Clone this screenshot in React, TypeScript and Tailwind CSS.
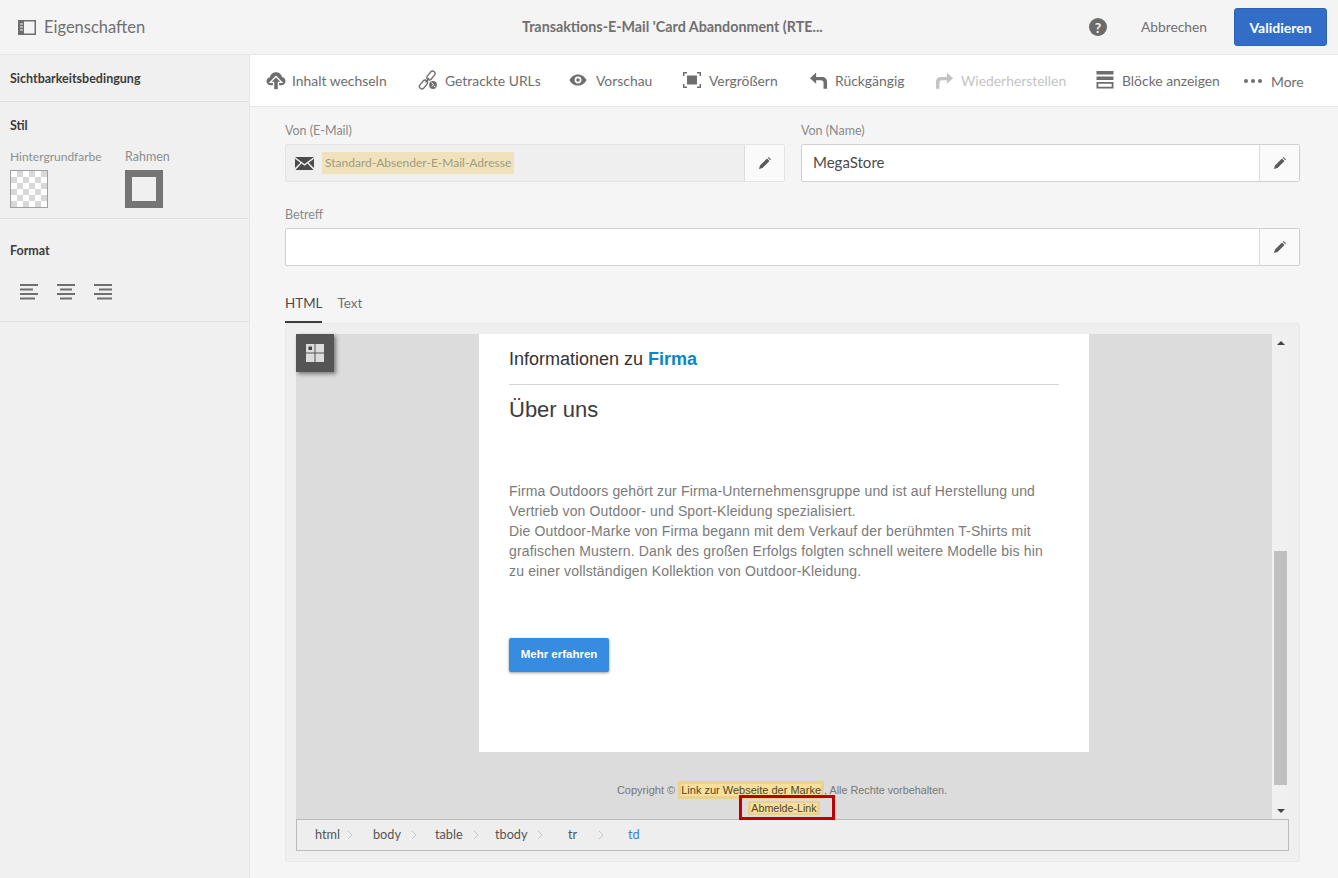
import React from 'react';

const UI = "font-['Lato','Noto_Sans',sans-serif]";

const tools = [
  { label: 'Inhalt wechseln', w: 'w-[152px]', lead: 'w-[26px]', icon: 'upload' },
  { label: 'Getrackte URLs', w: 'w-[151px]', lead: 'w-[27px]', icon: 'link' },
  { label: 'Vorschau', w: 'w-[114px]', lead: 'w-[27px]', icon: 'eye' },
  { label: 'Vergrößern', w: 'w-[126px]', lead: 'w-[26px]', icon: 'zoom' },
  { label: 'Rückgängig', w: 'w-[126px]', lead: 'w-[26px]', icon: 'undo' },
  { label: 'Wiederherstellen', w: 'w-[161px]', lead: 'w-[26px]', icon: 'redo', disabled: true },
  { label: 'Blöcke anzeigen', w: 'w-[148px]', lead: 'w-[26px]', icon: 'blocks' },
];

const ToolIcon: React.FC<{ name: string }> = ({ name }) => {
  switch (name) {
    case 'upload':
      return (
        <svg viewBox="1 1 18 19" className="w-[20px] h-[20px]" fill="currentColor">
          <path d="M5 15.500C2.600 15.500 1 13.800 1 11.700c0-2 1.400-3.400 3.200-3.700C4.700 5.200 7 3.200 10 3.200c2.900 0 5 1.800 5.700 4.400 1.900.2 3.300 1.800 3.300 3.900 0 2.200-1.600 4-4 4z" />
          <path d="M10 7.200 15.500 12.800H12.300V19.800H7.700V12.800H4.500z" stroke="#ffffff" strokeWidth="1.200" />
        </svg>
      );
    case 'link':
      return (
        <svg viewBox="0 0 20 20" className="w-[20px] h-[20px]" fill="none" stroke="currentColor" strokeWidth="1.300">
          <rect x="10.500" y="0.500" width="5" height="10" rx="2.500" transform="rotate(40 13 5.500)" />
          <rect x="3" y="9.500" width="5" height="10" rx="2.500" transform="rotate(40 5.500 14.500)" />
          <path d="M7.500 12.500 11 8" />
          <circle cx="15" cy="15" r="5" fill="#ffffff" stroke="none" />
          <circle cx="15" cy="15" r="3.900" fill="currentColor" stroke="none" />
          <path d="M13.500 12.500l2 2.200-1.600 1.800M16 16l1.500 1.200" stroke="#ffffff" strokeWidth="1" />
        </svg>
      );
    case 'eye':
      return (
        <svg viewBox="0 0 20 20" className="w-[18px] h-[18px]" fill="currentColor">
          <path fillRule="evenodd" d="M10 3.800c4.300 0 7.700 2.700 9.500 6.200-1.800 3.500-5.200 6.200-9.500 6.200S2.300 13.500.5 10C2.300 6.500 5.700 3.800 10 3.800zm0 2.400a3.800 3.800 0 1 0 0 7.600 3.800 3.800 0 0 0 0-7.600zm0 1.800a2 2 0 1 1 0 4 2 2 0 0 1 0-4z" />
        </svg>
      );
    case 'zoom':
      return (
        <svg viewBox="0 0 18 18" className="w-[18px] h-[18px]" fill="currentColor">
          <path d="M0 1h4v1.500H1.500V5H0zM14 1h4v4h-1.500V2.500H14zM0 13h1.500v2.500H4V17H0zM16.500 13H18v4h-4v-1.500h2.500zM4 4.500h10v9H4z" />
        </svg>
      );
    case 'undo':
      return (
        <svg viewBox="0 0 20 20" className="w-[19px] h-[19px]" fill="currentColor">
          <path d="M7.500 1.500 1 7.500 7.500 13.500V9.800h5c1.800 0 2.800 1 2.800 2.600v6.300h3.700V11.500c0-3.300-2.200-5.300-5.500-5.300H7.500z" />
        </svg>
      );
    case 'redo':
      return (
        <svg viewBox="0 0 20 20" className="w-[19px] h-[19px]" fill="currentColor">
          <path d="M12.500 1.500 19 7.500 12.500 13.500V9.800h-5c-1.800 0-2.800 1-2.800 2.600v6.300H1V11.500c0-3.300 2.200-5.300 5.500-5.300h6z" />
        </svg>
      );
    default:
      return (
        <svg viewBox="0 0 17 18" className="w-[18px] h-[18px]" fill="currentColor">
          <path d="M0 0h17v3.500H0zM0 5.500h17V9H0zM0 11h17v6.500H0zm1.800 1.800v2.900h13.400v-2.900z" fillRule="evenodd" />
        </svg>
      );
  }
};

const Envelope = () => (
  <svg viewBox="0 0 19 13" className="w-[19px] h-[13px] text-[#4b4b4b]" fill="currentColor">
    <path d="M0 0h19L9.500 7zM0 1.700l5.400 4L0 11zM19 1.700l-5.400 4L19 11zM6.500 6.500l3 2.200 3-2.200L18.500 13H.5z" />
  </svg>
);

const AlignIcon: React.FC<{ kind: 'left' | 'center' | 'right' }> = ({ kind }) => {
  const bars = [
    [0, 18],
    kind === 'left' ? [0, 13] : kind === 'center' ? [3, 12] : [5, 13],
    [0, 18],
    kind === 'left' ? [0, 15] : kind === 'center' ? [3, 12] : [3, 15],
  ];
  return (
    <svg viewBox="0 0 18 16" className="w-[18px] h-[16px] text-[#6e6e6e]" fill="currentColor">
      {bars.map(([x, w], i) => (
        <rect key={i} x={x} y={i * 4.500} width={w} height="2" />
      ))}
    </svg>
  );
};

const EditBtn = () => (
  <div className="w-[40px] shrink-0 flex items-center justify-center border-l border-[#dcdcdc] bg-[#fafafa]">
    <svg viewBox="0 0 12 12" className="w-[12px] h-[12px] text-[#5a5a5a]" fill="currentColor">
      <path d="M0 12 1 8.500 8 1.500 10.500 4 3.500 11zM8.800.8 9.600 0 12 2.400l-.8.8z" />
    </svg>
  </div>
);

const Section: React.FC<{ className: string; children: React.ReactNode }> = ({ className, children }) => (
  <div className={`border-b border-[#e0e0e0] px-[10px] ${className}`}>{children}</div>
);

const crumbs = [
  { t: 'html', w: 'w-[58px]', gap: 'ml-[7px]' },
  { t: 'body', w: 'w-[62px]', gap: 'ml-[10px]' },
  { t: 'table', w: 'w-[60px]', gap: 'ml-[10px]' },
  { t: 'tbody', w: 'w-[73px]', gap: 'ml-[9px]' },
  { t: 'tr', w: 'w-[60px]', gap: 'ml-[21px]' },
];

export default function App() {
  return (
    <div className={`w-[1338px] h-[878px] overflow-hidden flex flex-col bg-[#f5f5f5] text-[#6e6e6e] ${UI}`}>
      {/* Top bar */}
      <div className="h-[55px] shrink-0 bg-[#f4f4f4] border-b border-[#e6e6e6] flex items-center relative">
        <div className="flex items-center pl-[18px]">
          <svg viewBox="0 0 18 15" className="w-[18px] h-[15px]" fill="none">
            <rect x=".750" y=".750" width="16.500" height="13.500" stroke="#6e6e6e" strokeWidth="1.500" />
            <path d="M1 1h5v13H1z" fill="#6e6e6e" />
            <path d="M2 4h3M2 7h3M2 10h3" stroke="#f4f4f4" strokeWidth="1" />
          </svg>
          <span className="ml-[8px] text-[16.500px] text-[#707070]">Eigenschaften</span>
        </div>
        <div className="absolute left-[522px] top-[17px] text-[14.300px] font-bold leading-[20px] text-[#707070]">
          Transaktions-E-Mail 'Card Abandonment (RTE...
        </div>
        <div className="ml-auto flex items-center pr-[11px]">
          <div className="w-[18px] h-[18px] rounded-full bg-[#6b6b6b] text-[#f4f4f4] text-[14px] font-bold flex items-center justify-center">?</div>
          <span className="ml-[34px] text-[13.800px] text-[#707070]">Abbrechen</span>
          <button className="ml-[27px] w-[93px] h-[38px] rounded-[3px] bg-[#326ec8] border border-[#2d62b3] text-white text-[14px] font-bold">
            Validieren
          </button>
        </div>
      </div>

      <div className="flex-1 flex min-h-0">
        {/* Sidebar */}
        <aside className="w-[250px] shrink-0 bg-[#f0f0f0] border-r border-[#e8e8e8]">
          <Section className="h-[47px] flex items-center pt-[3px]">
            <span className="text-[12.500px] font-bold text-[#3c3c3c]">Sichtbarkeitsbedingung</span>
          </Section>
          <Section className="h-[117px] pt-[14px]">
            <div className="text-[12.500px] font-bold leading-[20px] text-[#3c3c3c]">Stil</div>
            <div className="flex mt-[12px]">
              <div className="w-[115px]">
                <div className="text-[12px] leading-[18px] text-[#8e8e8e]">Hintergrundfarbe</div>
                <div className="mt-[4px] w-[38px] h-[38px] border border-[#a0a0a0] bg-[conic-gradient(#d8d8d8_25%,#ffffff_0_50%,#d8d8d8_0_75%,#ffffff_0)] bg-[length:12px_12px]" />
              </div>
              <div>
                <div className="text-[12.500px] leading-[18px] text-[#8e8e8e]">Rahmen</div>
                <div className="mt-[4px] w-[38px] h-[38px] border-[7px] border-[#757575] bg-[#f0f0f0]" />
              </div>
            </div>
          </Section>
          <Section className="h-[103px] pt-[22px]">
            <div className="text-[12.500px] font-bold leading-[20px] text-[#3c3c3c]">Format</div>
            <div className="flex gap-[19px] pl-[10px] mt-[23px]">
              <AlignIcon kind="left" />
              <AlignIcon kind="center" />
              <AlignIcon kind="right" />
            </div>
          </Section>
        </aside>

        <main className="flex-1 min-w-0 flex flex-col">
          {/* Toolbar */}
          <div className="h-[52px] shrink-0 bg-white border-b border-[#e8e8e8] flex items-center pl-[16px] text-[13.900px] text-[#6e6e6e]">
            {tools.map(t => (
              <div key={t.label} className={`${t.w} flex items-center ${t.disabled ? 'text-[#c4c4c4]' : ''}`}>
                <div className={`${t.lead} shrink-0`}><ToolIcon name={t.icon} /></div>
                <span className="whitespace-nowrap pt-[2px]">{t.label}</span>
              </div>
            ))}
            <div className="flex items-center mt-[2px]">
              <span className="flex gap-[3px] w-[27px]">
                <i className="w-[4px] h-[4px] rounded-full bg-[#6e6e6e]" />
                <i className="w-[4px] h-[4px] rounded-full bg-[#6e6e6e]" />
                <i className="w-[4px] h-[4px] rounded-full bg-[#6e6e6e]" />
              </span>
              <span className="pt-[2px]">More</span>
            </div>
          </div>

          {/* Form */}
          <div className="flex-1 min-h-0 pl-[35px] pr-[38px]">
            <div className="flex gap-[16px] pt-[15px]">
              <div className="w-[500px]">
                <div className="text-[12.500px] leading-[18px] text-[#8a8a8a]">Von (E-Mail)</div>
                <div className="mt-[4px] h-[38px] flex border border-[#e4e4e4] bg-[#efefef] rounded-[2px]">
                  <div className="flex-1 flex items-center pl-[9px]">
                    <Envelope />
                    <span className="ml-[8px] h-[22px] px-[3px] flex items-center bg-[#f0e2bb] text-[12px] text-[#a09a80]">
                      Standard-Absender-E-Mail-Adresse
                    </span>
                  </div>
                  <EditBtn />
                </div>
              </div>
              <div className="flex-1">
                <div className="text-[12.500px] leading-[18px] text-[#8a8a8a]">Von (Name)</div>
                <div className="mt-[4px] h-[38px] flex border border-[#d0d0d0] bg-white rounded-[2px]">
                  <div className="flex-1 flex items-center pl-[11px] pb-[2px] text-[15px] text-[#4b4b4b]">MegaStore</div>
                  <EditBtn />
                </div>
              </div>
            </div>

            <div className="mt-[24px] text-[12.500px] leading-[18px] text-[#8a8a8a]">Betreff</div>
            <div className="mt-[4px] h-[38px] flex border border-[#d0d0d0] bg-white rounded-[2px]">
              <div className="flex-1" />
              <EditBtn />
            </div>

            {/* Tabs */}
            <div className="mt-[26px] flex gap-[15px] text-[13.400px] h-[32px]">
              <div className="h-[31px] border-b-2 border-[#3c3c3c] text-[#4b4b4b] leading-[22px]">HTML</div>
              <div className="text-[#707070] leading-[22px]">Text</div>
            </div>

            {/* Editor panel */}
            <div className="w-[1015px] h-[539px] -mt-px bg-[#efefef] border border-[#e8e8e8] rounded-[3px] pl-[10px] pt-[10px] flex flex-col">
              <div className="h-[485px] flex">
                <div className="relative w-[976px] bg-[#dcdcdc] flex flex-col items-center font-['Liberation_Sans',Arial,sans-serif]">
                  <div className="absolute left-0 top-0 w-[38px] h-[38px] bg-[#555555] shadow-[2px_2px_4px_rgba(0,0,0,0.45)] flex items-center justify-center">
                    <svg viewBox="0 0 18 18" className="w-[18px] h-[18px]">
                      <path d="M0 0h8.500v8.500H0zM9.500 0H18v8.500H9.500zM0 9.500h8.500V18H0zM9.500 9.500H18V18H9.500z" fill="#dcdcdc" />
                      <path d="M2.500 2.500h3.500V6H2.500z" fill="#444444" />
                    </svg>
                  </div>
                  <div className="w-[610px] h-[418px] shrink-0 bg-white pl-[30px] pr-[30px]">
                    <div className="h-[51px] border-b border-[#d4d4d4] pt-[14px] text-[18px] leading-[22px] text-[#333333]">
                      Informationen zu <b className="text-[#0b86c6]">Firma</b>
                    </div>
                    <div className="mt-[11px] text-[22px] leading-[28px] text-[#3c3c3c]">Über uns</div>
                    <p className="mt-[57px] text-[14px] tracking-[0.15px] leading-[20px] text-[#7a7a7a] whitespace-nowrap">
                      Firma Outdoors gehört zur Firma-Unternehmensgruppe und ist auf Herstellung und<br />
                      Vertrieb von Outdoor- und Sport-Kleidung spezialisiert.<br />
                      Die Outdoor-Marke von Firma begann mit dem Verkauf der berühmten T-Shirts mit<br />
                      grafischen Mustern. Dank des großen Erfolgs folgten schnell weitere Modelle bis hin<br />
                      zu einer vollständigen Kollektion von Outdoor-Kleidung.
                    </p>
                    <div className="mt-[57px] w-[100px] h-[34px] rounded-[2px] bg-[#368ce0] shadow-[0_1px_3px_rgba(0,0,0,0.4)] text-white text-[11.500px] font-bold flex items-center justify-center">
                      Mehr erfahren
                    </div>
                  </div>
                  <div className="mt-[29px] flex items-center text-[11px] leading-[12px] text-[#777777] whitespace-nowrap pr-[4px]">
                    <span>Copyright ©&nbsp;</span>
                    <span className="border-[3px] border-[#ebd18c] bg-[#f9df9b] text-[#4f4526]">Link zur Webseite der Marke</span>
                    <span className="text-[10.800px]">, Alle Rechte vorbehalten.</span>
                  </div>
                  <div className="mt-[2px] border-x-[3px] border-y-[2px] border-[#ebd18c] bg-[#f9df9b] text-[10.700px] leading-[10px] text-[#4f4526]">Abmelde-Link</div>
                  {/* Red callout around the unsubscribe link */}
                  <div className="absolute left-[443px] top-[461px] w-[96px] h-[25px] border-[3px] border-[#bf0000]" />
                </div>
                {/* Scrollbar */}
                <div className="relative w-[17px] bg-[#f0f0f0] flex flex-col items-center justify-between pt-[7px] pb-[6px]">
                  <i className="w-0 h-0 border-x-[4px] border-x-transparent border-b-[4px] border-b-[#444444]" />
                  <div className="absolute left-[2px] top-[217px] w-[13px] h-[234px] bg-[#c0c0c0]" />
                  <i className="w-0 h-0 border-x-[4px] border-x-transparent border-t-[4px] border-t-[#444444]" />
                </div>
              </div>
              {/* Breadcrumb */}
              <div className="w-[993px] h-[32px] border border-[#bbbbbb] bg-[#eeeeee] flex items-center pl-[18px] text-[12.700px] text-[#555555]">
                {crumbs.map(c => (
                  <div key={c.t} className={`${c.w} flex items-center`}>
                    <span>{c.t}</span>
                    <svg viewBox="0 0 6 10" className={`w-[6px] h-[10px] ${c.gap} text-[#c8c8c8]`} fill="none" stroke="currentColor">
                      <path d="M1 1l4 4-4 4" />
                    </svg>
                  </div>
                ))}
                <span className="text-[#3f7fd0]">td</span>
              </div>
            </div>
          </div>
        </main>
      </div>
    </div>
  );
}
